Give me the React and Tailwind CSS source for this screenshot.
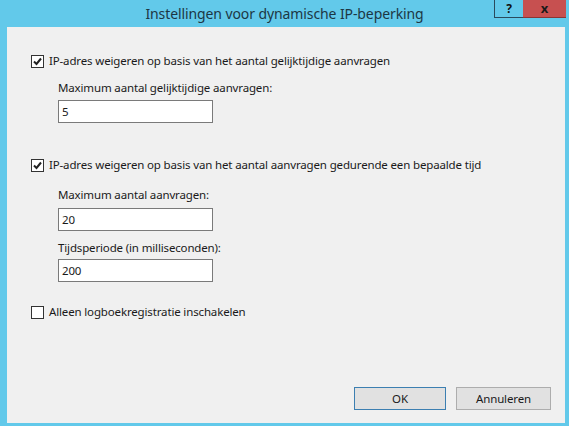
import React from 'react';

const font = { fontFamily: '"Noto Sans", "Open Sans", Arial, sans-serif' };

const CheckBox = ({ checked }) => (
    <span className="w-[13px] h-[13px] border border-[#333333] bg-white flex items-center justify-center shrink-0">
        {checked && (
            <svg width="11" height="11" viewBox="0 0 11 11">
                <path d="M2 5.5 L4.5 8 L9 2.5" fill="none" stroke="#222222" strokeWidth="2" />
            </svg>
        )}
    </span>
);

const CheckRow = ({ checked, label, className }) => (
    <div className={`flex items-center gap-[5px] h-[16px] ${className}`}>
        <CheckBox checked={checked} />
        <span>{label}</span>
    </div>
);

const Field = ({ value, className }) => (
    <div className={`w-[155px] h-[23px] border border-[#7a7a7a] bg-white flex items-center pl-[3px] ${className}`}>
        {value}
    </div>
);

const Button = ({ children, primary, width }) => (
    <button className={`${width} h-[23px] bg-[#e1e1e1] border ${primary ? 'border-[#3c7fb1]' : 'border-[#adadad]'} text-[11.5px] tracking-[-0.15px] text-[#1a1a1a]`}>
        {children}
    </button>
);

const App = () => {
    return (
        <div className="w-[569px] h-[426px] bg-[#62c9ea] flex flex-col" style={font}>
            <div className="h-[27px] grid grid-cols-[75px_1fr_75px] shrink-0">
                <div />
                <div className="text-center text-[14px] tracking-[-0.1px] leading-[27px] text-[#1c3744]">Instellingen voor dynamische IP-beperking</div>
                <div className="flex items-start">
                    <div className="w-[29px] h-[18px] border-l border-b border-[#2a4a5c] flex items-center justify-center text-[12px] font-bold text-[#111111]">?</div>
                    <div className="w-[43px] h-[18px] bg-[#c75050] border-b border-[#8a3535] flex items-center justify-center text-[13px] font-bold text-[#1a1a1a] leading-none">x</div>
                </div>
            </div>
            <div className="flex-1 ml-[7px] mr-[4px] mb-[3px] bg-[#f0f0f0] flex flex-col pl-[24px] pt-[26px] pr-[14px] pb-[13px] text-[11.5px] tracking-[-0.15px] text-[#1a1a1a]">
                <CheckRow checked label="IP-adres weigeren op basis van het aantal gelijktijdige aanvragen" />
                <div className="pl-[27px] flex flex-col">
                    <div className="mt-[11px] h-[16px] leading-[16px]">Maximum aantal gelijktijdige aanvragen:</div>
                    <Field value="5" className="mt-[4px]" />
                </div>
                <CheckRow checked className="mt-[34px]" label="IP-adres weigeren op basis van het aantal aanvragen gedurende een bepaalde tijd" />
                <div className="pl-[27px] flex flex-col">
                    <div className="mt-[14px] h-[16px] leading-[16px]">Maximum aantal aanvragen:</div>
                    <Field value="20" className="mt-[5px]" />
                    <div className="mt-[9px] h-[16px] leading-[16px]">Tijdsperiode (in milliseconden):</div>
                    <Field value="200" className="mt-[3px]" />
                </div>
                <CheckRow className="mt-[22px]" label="Alleen logboekregistratie inschakelen" />
                <div className="flex-1" />
                <div className="flex justify-end gap-[10px]">
                    <Button primary width="w-[92px]">OK</Button>
                    <Button width="w-[95px]">Annuleren</Button>
                </div>
            </div>
        </div>
    );
};

export default App;
